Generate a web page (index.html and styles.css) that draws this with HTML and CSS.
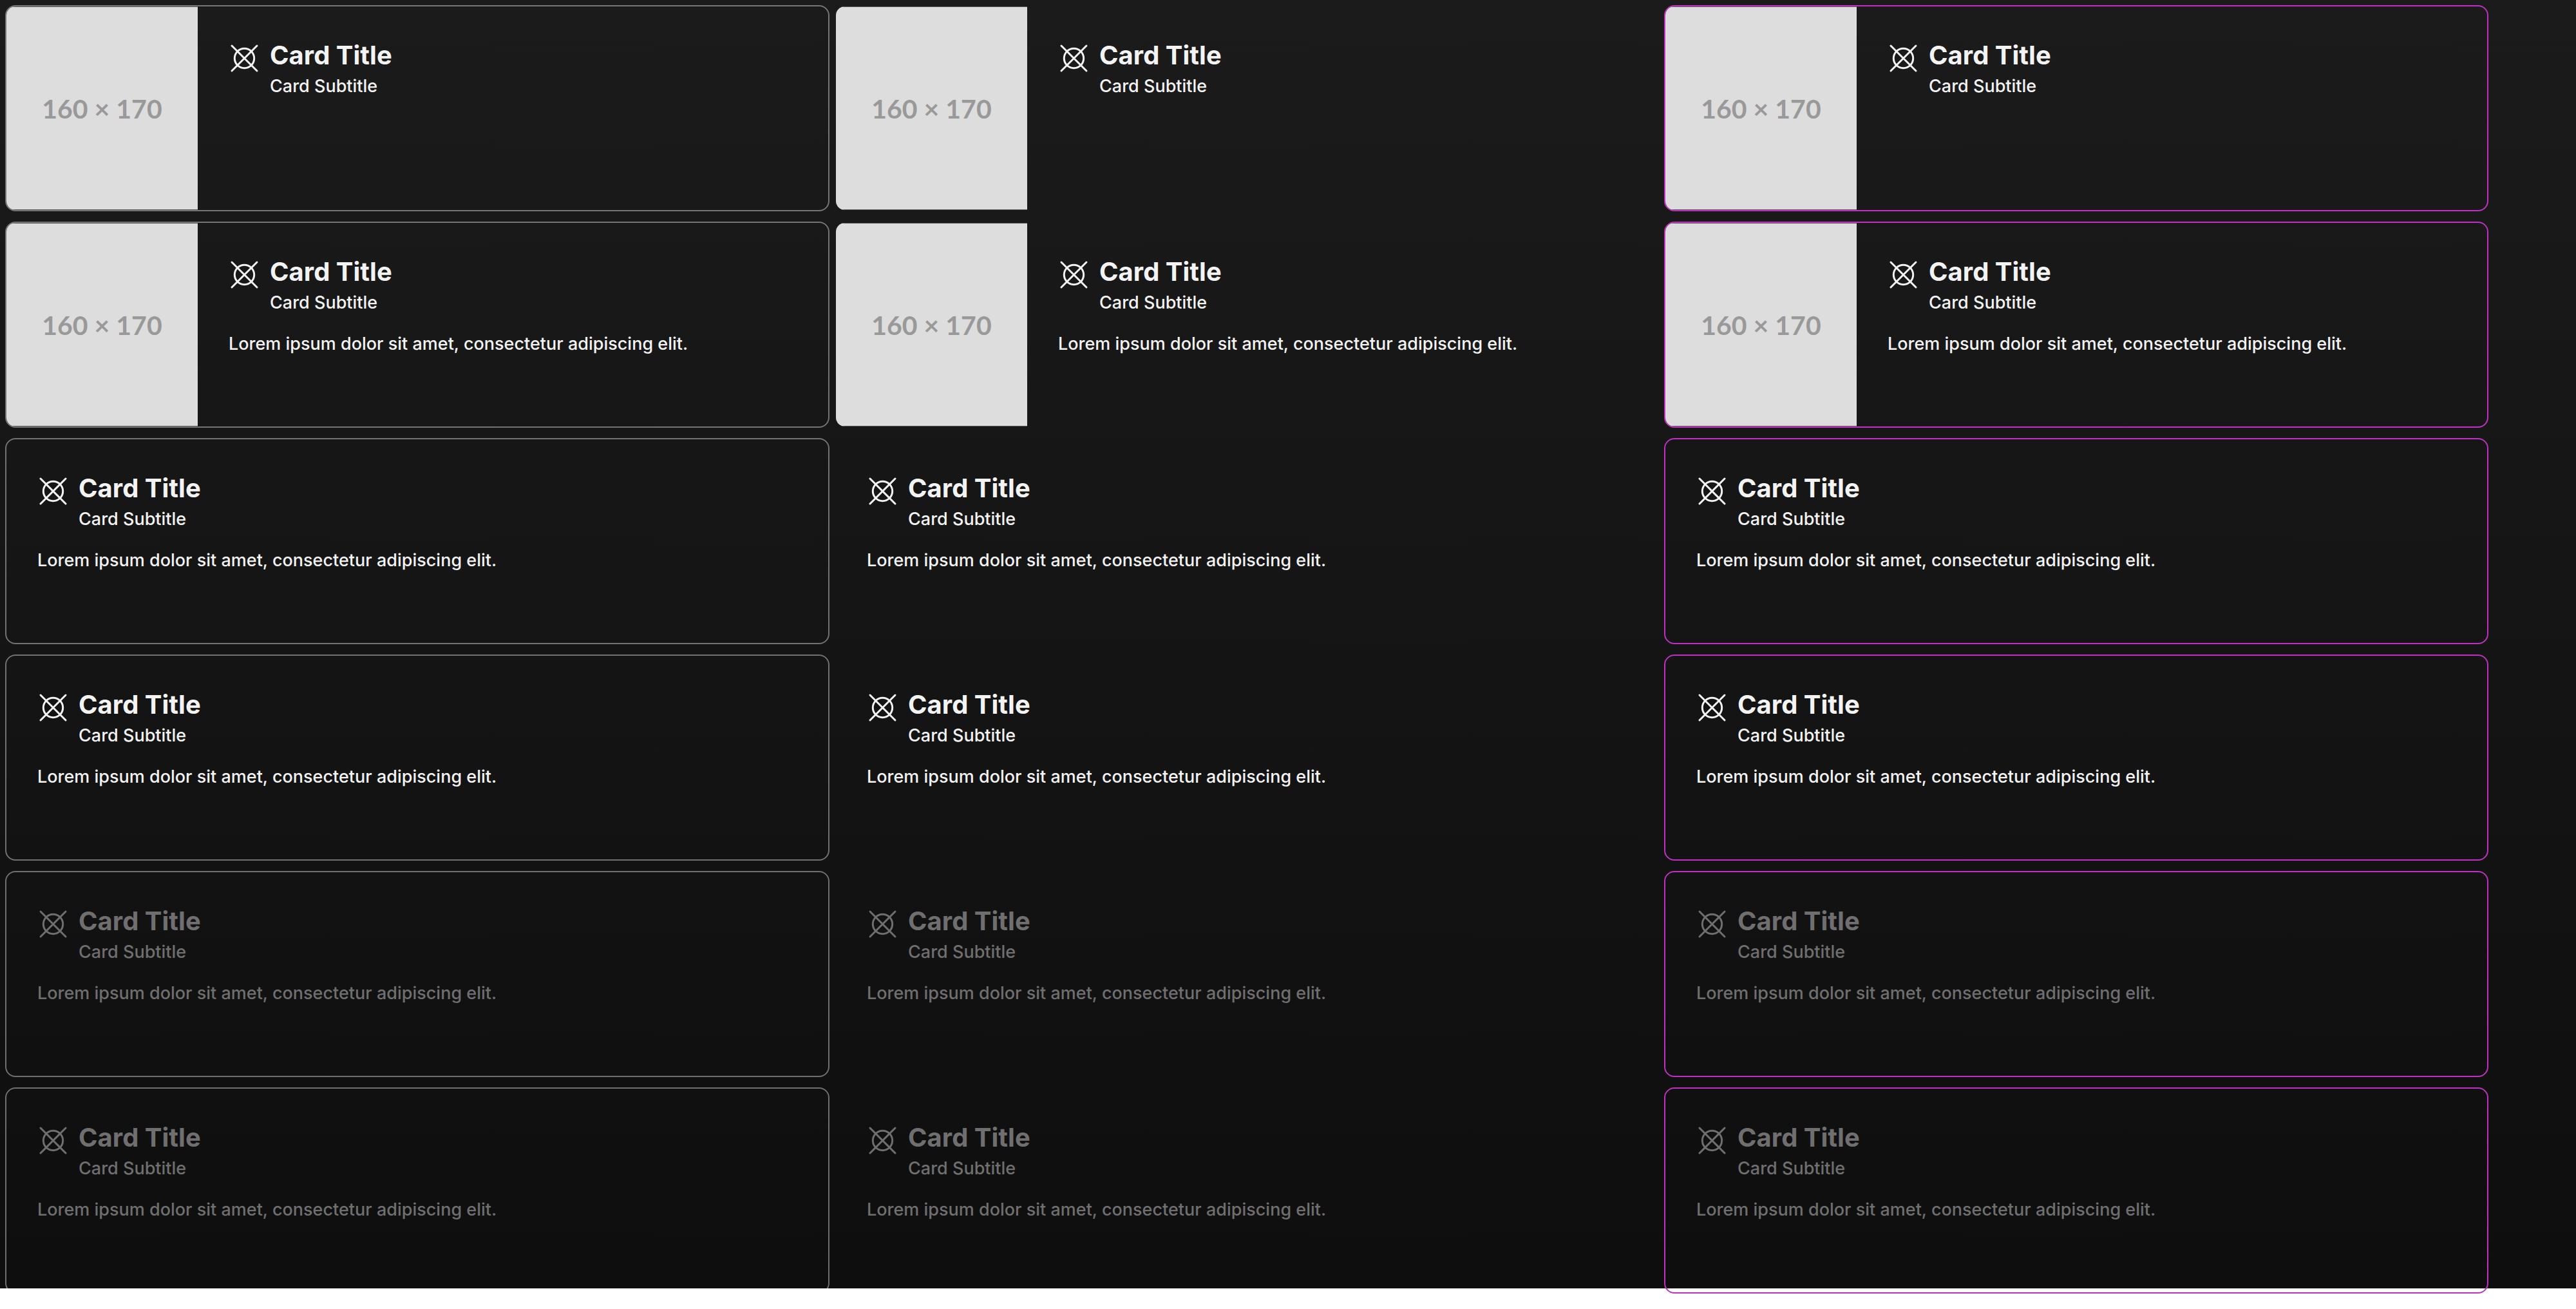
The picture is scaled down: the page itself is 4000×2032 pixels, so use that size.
FILE: index.html
```html
<!DOCTYPE html>
<html lang="en">
<head>
<meta charset="utf-8">
<title>Cards</title>
<link rel="stylesheet" href="styles.css">
</head>
<body>
<svg class="sprite" aria-hidden="true">
  <symbol id="mark" viewBox="0 0 48 48">
    <g fill="none" stroke="currentColor" stroke-width="3" stroke-linecap="round">
      <circle cx="24.5" cy="24.5" r="15.2"/>
      <path d="M5 5 44 44M44 5 5 44"/>
    </g>
  </symbol>
</svg>
<main class="board">
  <article class="card outlined">
    <div class="media">160 × 170</div>
    <div class="content">
      <header class="head"><svg class="icon"><use href="#mark"/></svg><div><h2 class="title">Card Title</h2><p class="subtitle">Card Subtitle</p></div></header>
    </div>
  </article>
  <article class="card">
    <div class="media">160 × 170</div>
    <div class="content">
      <header class="head"><svg class="icon"><use href="#mark"/></svg><div><h2 class="title">Card Title</h2><p class="subtitle">Card Subtitle</p></div></header>
    </div>
  </article>
  <article class="card accent">
    <div class="media">160 × 170</div>
    <div class="content">
      <header class="head"><svg class="icon"><use href="#mark"/></svg><div><h2 class="title">Card Title</h2><p class="subtitle">Card Subtitle</p></div></header>
    </div>
  </article>

  <article class="card outlined">
    <div class="media">160 × 170</div>
    <div class="content">
      <header class="head"><svg class="icon"><use href="#mark"/></svg><div><h2 class="title">Card Title</h2><p class="subtitle">Card Subtitle</p></div></header>
      <p class="text">Lorem ipsum dolor sit amet, consectetur adipiscing elit.</p>
    </div>
  </article>
  <article class="card">
    <div class="media">160 × 170</div>
    <div class="content">
      <header class="head"><svg class="icon"><use href="#mark"/></svg><div><h2 class="title">Card Title</h2><p class="subtitle">Card Subtitle</p></div></header>
      <p class="text">Lorem ipsum dolor sit amet, consectetur adipiscing elit.</p>
    </div>
  </article>
  <article class="card accent">
    <div class="media">160 × 170</div>
    <div class="content">
      <header class="head"><svg class="icon"><use href="#mark"/></svg><div><h2 class="title">Card Title</h2><p class="subtitle">Card Subtitle</p></div></header>
      <p class="text">Lorem ipsum dolor sit amet, consectetur adipiscing elit.</p>
    </div>
  </article>

  <article class="card outlined">
    <div class="content">
      <header class="head"><svg class="icon"><use href="#mark"/></svg><div><h2 class="title">Card Title</h2><p class="subtitle">Card Subtitle</p></div></header>
      <p class="text">Lorem ipsum dolor sit amet, consectetur adipiscing elit.</p>
    </div>
  </article>
  <article class="card">
    <div class="content">
      <header class="head"><svg class="icon"><use href="#mark"/></svg><div><h2 class="title">Card Title</h2><p class="subtitle">Card Subtitle</p></div></header>
      <p class="text">Lorem ipsum dolor sit amet, consectetur adipiscing elit.</p>
    </div>
  </article>
  <article class="card accent">
    <div class="content">
      <header class="head"><svg class="icon"><use href="#mark"/></svg><div><h2 class="title">Card Title</h2><p class="subtitle">Card Subtitle</p></div></header>
      <p class="text">Lorem ipsum dolor sit amet, consectetur adipiscing elit.</p>
    </div>
  </article>

  <article class="card outlined">
    <div class="content">
      <header class="head"><svg class="icon"><use href="#mark"/></svg><div><h2 class="title">Card Title</h2><p class="subtitle">Card Subtitle</p></div></header>
      <p class="text">Lorem ipsum dolor sit amet, consectetur adipiscing elit.</p>
    </div>
  </article>
  <article class="card">
    <div class="content">
      <header class="head"><svg class="icon"><use href="#mark"/></svg><div><h2 class="title">Card Title</h2><p class="subtitle">Card Subtitle</p></div></header>
      <p class="text">Lorem ipsum dolor sit amet, consectetur adipiscing elit.</p>
    </div>
  </article>
  <article class="card accent">
    <div class="content">
      <header class="head"><svg class="icon"><use href="#mark"/></svg><div><h2 class="title">Card Title</h2><p class="subtitle">Card Subtitle</p></div></header>
      <p class="text">Lorem ipsum dolor sit amet, consectetur adipiscing elit.</p>
    </div>
  </article>

  <article class="card outlined disabled">
    <div class="content">
      <header class="head"><svg class="icon"><use href="#mark"/></svg><div><h2 class="title">Card Title</h2><p class="subtitle">Card Subtitle</p></div></header>
      <p class="text">Lorem ipsum dolor sit amet, consectetur adipiscing elit.</p>
    </div>
  </article>
  <article class="card disabled">
    <div class="content">
      <header class="head"><svg class="icon"><use href="#mark"/></svg><div><h2 class="title">Card Title</h2><p class="subtitle">Card Subtitle</p></div></header>
      <p class="text">Lorem ipsum dolor sit amet, consectetur adipiscing elit.</p>
    </div>
  </article>
  <article class="card accent disabled">
    <div class="content">
      <header class="head"><svg class="icon"><use href="#mark"/></svg><div><h2 class="title">Card Title</h2><p class="subtitle">Card Subtitle</p></div></header>
      <p class="text">Lorem ipsum dolor sit amet, consectetur adipiscing elit.</p>
    </div>
  </article>

  <article class="card outlined disabled">
    <div class="content">
      <header class="head"><svg class="icon"><use href="#mark"/></svg><div><h2 class="title">Card Title</h2><p class="subtitle">Card Subtitle</p></div></header>
      <p class="text">Lorem ipsum dolor sit amet, consectetur adipiscing elit.</p>
    </div>
  </article>
  <article class="card disabled">
    <div class="content">
      <header class="head"><svg class="icon"><use href="#mark"/></svg><div><h2 class="title">Card Title</h2><p class="subtitle">Card Subtitle</p></div></header>
      <p class="text">Lorem ipsum dolor sit amet, consectetur adipiscing elit.</p>
    </div>
  </article>
  <article class="card accent disabled">
    <div class="content">
      <header class="head"><svg class="icon"><use href="#mark"/></svg><div><h2 class="title">Card Title</h2><p class="subtitle">Card Subtitle</p></div></header>
      <p class="text">Lorem ipsum dolor sit amet, consectetur adipiscing elit.</p>
    </div>
  </article>
</main>
</body>
</html>
```

FILE: styles.css
```css
* {
  box-sizing: border-box;
}

body {
  margin: 0;
  background: #fff;
  font-family: Inter, "Liberation Sans", sans-serif;
}

.sprite {
  display: none;
}

/* The backdrop stops short of the last row's lower edge. */
.board {
  display: grid;
  grid-template-columns: repeat(3, minmax(0, 1280px));
  gap: 16px 8px;
  padding: 8px 8px 0;
  background: linear-gradient(#1b1b1b, #0e0e0e) no-repeat;
  background-size: 100% calc(100% - 8px);
}

.card {
  display: flex;
  min-height: 320px;
  overflow: hidden;
  border: 2px solid transparent;
  border-radius: 16px;
  color: #f3f3f3;
}

.outlined {
  border-color: rgba(255, 255, 255, 0.4);
}

.accent {
  border-color: #c22fc4;
}

.disabled {
  color: #6f6f6f;
}

.media {
  display: flex;
  flex: none;
  align-items: center;
  justify-content: center;
  width: 297px;
  border: solid #5a5a5a;
  border-width: 1px 0;
  background: #ddd;
  color: #999;
  font-family: Lato, sans-serif;
  font-size: 41px;
  font-weight: 700;
}

.content {
  flex: 1;
  min-width: 0;
  padding: 48px;
}

.head {
  display: flex;
  gap: 16px;
}

.icon {
  flex: none;
  width: 48px;
  height: 48px;
  margin-top: 8px;
}

.title,
.subtitle,
.text {
  margin: 0;
  font-size: 27px;
  font-weight: 500;
  line-height: 40px;
}

.title {
  font-size: 40px;
  font-weight: 700;
  line-height: 56px;
}

.text {
  margin-top: 24px;
}
```
